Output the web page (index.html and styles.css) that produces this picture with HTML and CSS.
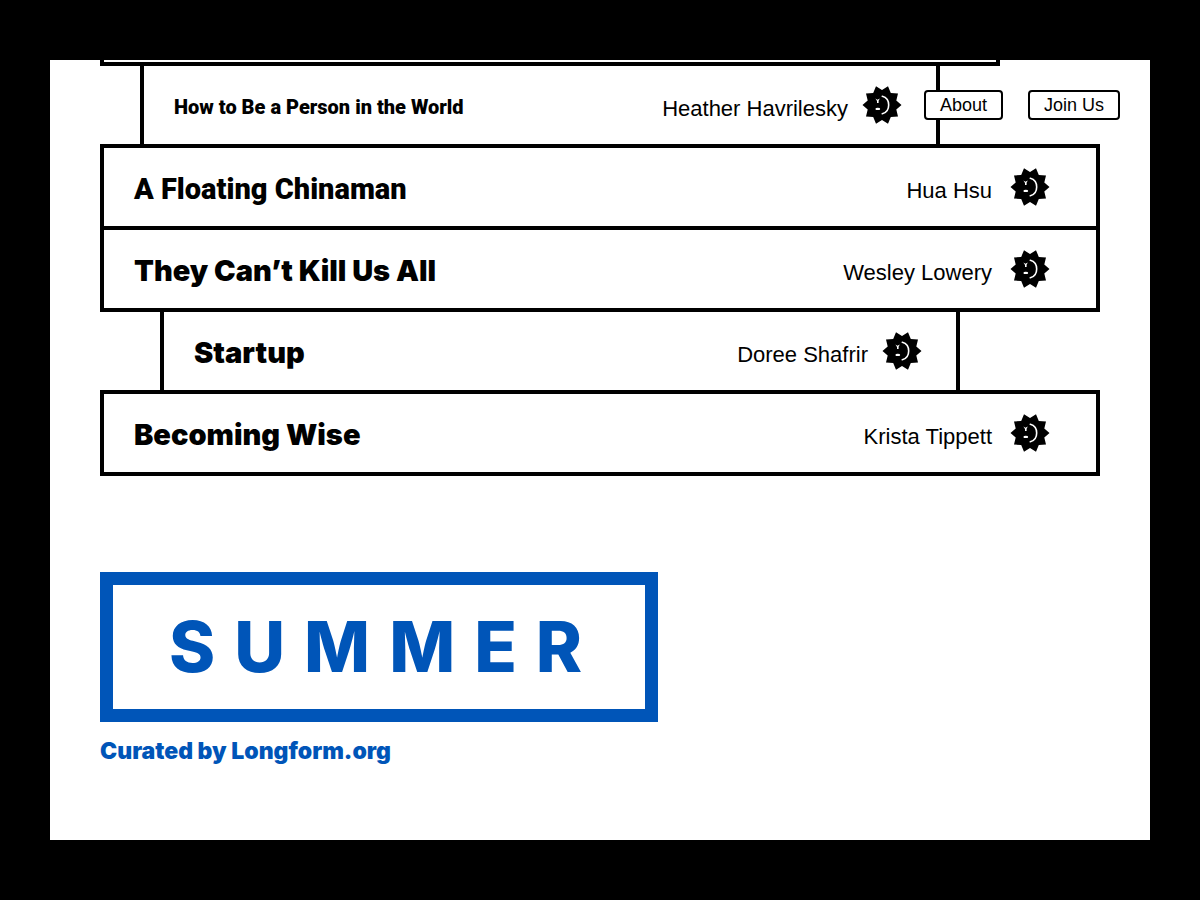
FILE: index.html
```html
<!DOCTYPE html>
<html lang="en">
<head>
<meta charset="utf-8">
<title>Summer reading</title>
<link rel="stylesheet" href="styles.css">
</head>
<body>
<svg width="0" height="0" class="sprite" aria-hidden="true">
  <symbol id="sun" viewBox="-20 -20 40 40">
    <path d="M19.500 0 14.300 4.600 16 11.500 8.800 12.100 6 18.800 0 15-6 18.800-8.800 12.100-16 11.500-14.300 4.600-19.500 0-14.300-4.600-16-11.500-8.800-12.100-6-18.800 0-15 6-18.800 8.800-12.100 16-11.500 14.300-4.600Z"/>
    <path class="smile" d="M.3-8.800C8.800-6.500 8.800 6.500.3 8.800"/>
    <path class="mark" d="M-6.600-6.400-4.600-5.200-2.200-6.600-3.400-4.200-3.400-2-5-2-5-4Z"/>
    <ellipse class="mark" cx="-4.200" cy="3.900" rx="2.400" ry="1.200"/>
  </symbol>
</svg>
<nav class="nav">
  <a class="nav-link" href="#about">About</a>
  <a class="nav-link" href="#join">Join Us</a>
</nav>
<main class="page">
  <ul class="stack">
    <li class="book book-top"></li>
    <li class="book book-small book-offset">
      <h2 class="title title-condensed">How to Be a Person in the World</h2>
      <span class="author">Heather Havrilesky</span>
      <svg class="sun" aria-hidden="true"><use href="#sun"/></svg>
    </li>
    <li class="book">
      <h2 class="title title-medium">A Floating Chinaman</h2>
      <span class="author">Hua Hsu</span>
      <svg class="sun" aria-hidden="true"><use href="#sun"/></svg>
    </li>
    <li class="book">
      <h2 class="title">They Can’t Kill Us All</h2>
      <span class="author">Wesley Lowery</span>
      <svg class="sun" aria-hidden="true"><use href="#sun"/></svg>
    </li>
    <li class="book book-small book-indent">
      <h2 class="title">Startup</h2>
      <span class="author">Doree Shafrir</span>
      <svg class="sun" aria-hidden="true"><use href="#sun"/></svg>
    </li>
    <li class="book">
      <h2 class="title">Becoming Wise</h2>
      <span class="author">Krista Tippett</span>
      <svg class="sun" aria-hidden="true"><use href="#sun"/></svg>
    </li>
  </ul>
  <section class="season">
    <h1 class="season-name">SUMMER</h1>
    <p class="curator">Curated by Longform.org</p>
  </section>
</main>
</body>
</html>
```
FILE: styles.css
```css
* { box-sizing: border-box; }
body {
  margin: 0;
  padding: 60px 50px;
  background: #000;
  color: #000;
  font-family: "Liberation Sans", Arial, sans-serif;
}
.sprite { position: absolute; }
.page {
  min-height: calc(100vh - 120px);
  padding: 0 50px 74px;
  background: #fff;
  overflow: hidden;
}
.nav {
  position: fixed;
  top: 90px;
  right: 80px;
  display: flex;
  gap: 25px;
}
.nav-link {
  padding: 0 14px;
  border: 2px solid #000;
  border-radius: 4px;
  background: #fff;
  color: #000;
  font-size: 18px;
  line-height: 26px;
  text-decoration: none;
}
.stack {
  margin: -80px 0 96px;
  padding: 0;
  list-style: none;
}
.book {
  display: flex;
  align-items: center;
  height: 86px;
  padding: 0 46px 0 30px;
  border: 4px solid #000;
}
.book + .book { margin-top: -4px; }
.book-top { width: 90%; }
.book-small {
  width: 80%;
  padding-right: 34px;
}
.book-offset { margin-left: 4%; }
.book-indent { margin-left: 6%; }
.title {
  flex: 1;
  margin: 0;
  padding-top: 4px;
  font-family: Inter, "Liberation Sans", sans-serif;
  font-size: 29px;
  font-weight: 900;
  line-height: 36px;
}
.title-medium,
.title-condensed {
  font-family: Roboto, "Liberation Sans", sans-serif;
}
.title-condensed { font-size: 20px; }
.author {
  margin-right: 18px;
  padding-top: 8px;
  font-size: 22px;
  line-height: 28px;
}
.book-small .author { margin-right: 14px; }
.sun {
  width: 40px;
  height: 40px;
}
.smile {
  fill: none;
  stroke: #fff;
  stroke-width: 1.6;
  stroke-linecap: round;
}
.mark { fill: #fff; }
.season {
  color: #0055b8;
  font-family: Inter, "Liberation Sans", sans-serif;
}
.season-name {
  width: fit-content;
  margin: 0;
  padding: 0 44px 0 56px;
  border: 13px solid;
  font-size: 70px;
  font-weight: 800;
  line-height: 124px;
  letter-spacing: 19px;
}
.curator {
  margin: 14px 0 0;
  font-size: 23px;
  font-weight: 900;
  line-height: 30px;
}
```
